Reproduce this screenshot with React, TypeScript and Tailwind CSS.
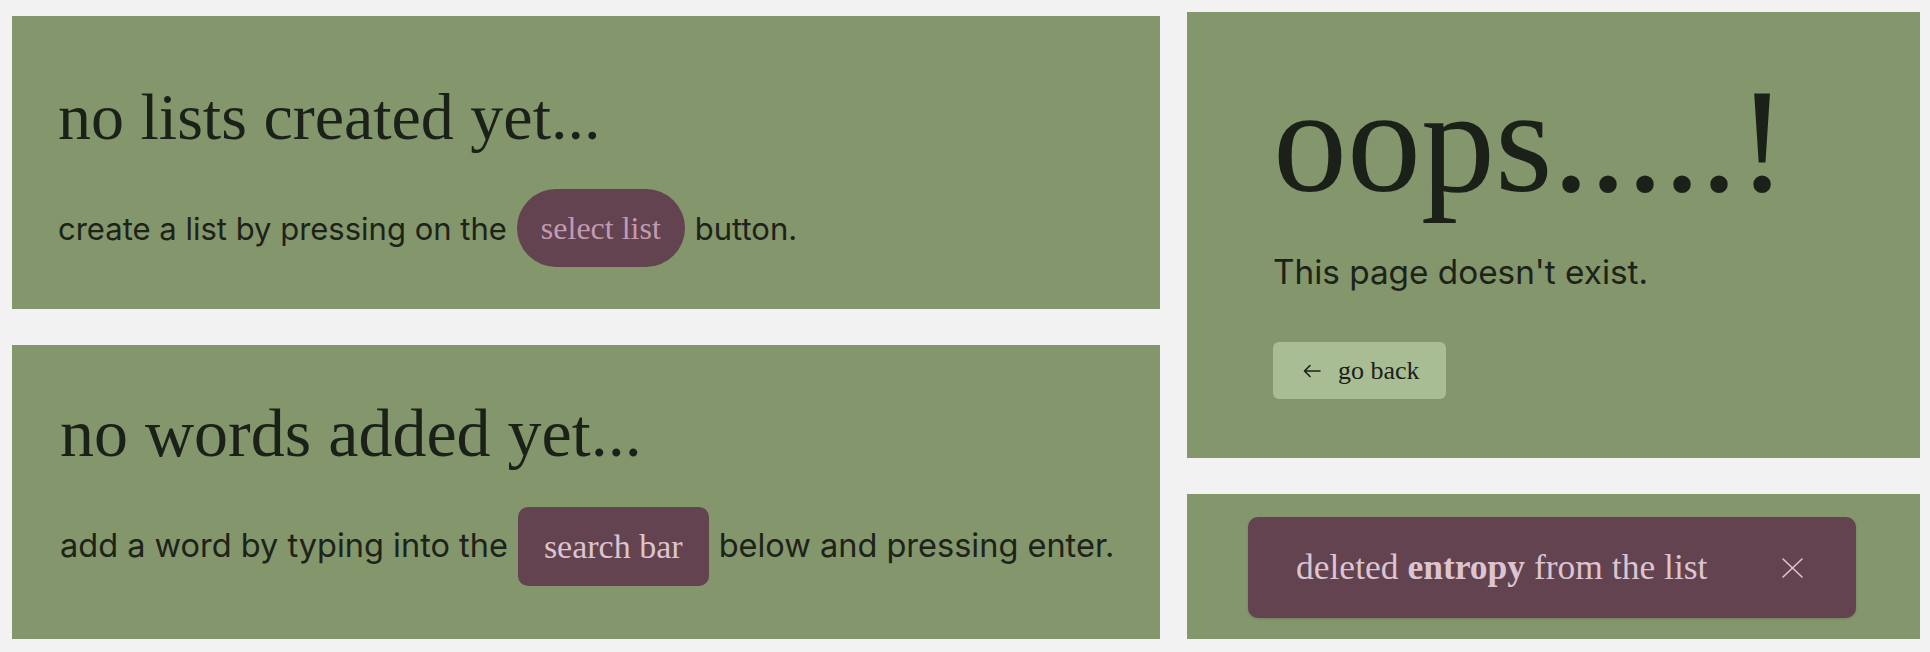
import React from 'react';

const serif = "font-['Liberation_Serif',serif]";
const sans = "font-['Inter',sans-serif]";

const EmptyLists = () => (
  <div className="h-[293px] bg-[#83966c] px-[46px] pt-[68px]">
    <h1 className={`${serif} text-[66px] leading-none text-[#1b2118]`}>no lists created yet...</h1>
    <p className={`${sans} mt-[39px] flex items-center whitespace-nowrap text-[31px] leading-none text-[#1d2319]`}>
      <span>create a list by pressing on the</span>
      <span className={`${serif} mx-[10px] flex h-[78px] items-center rounded-full bg-[#62434f] px-[24px] text-[32px] text-[#c29bb0]`}>
        select list
      </span>
      <span>button.</span>
    </p>
  </div>
);

const EmptyWords = () => (
  <div className="h-[294px] bg-[#83966c] pl-[48px] pt-[54px]">
    <h1 className={`${serif} text-[68px] leading-none text-[#1b2118]`}>no words added yet...</h1>
    <p className={`${sans} mt-[40px] flex items-center whitespace-nowrap text-[32.5px] leading-none text-[#1d2319]`}>
      <span className="shrink-0">add a word by typing into the</span>
      <span className={`${serif} mx-[10px] flex h-[79px] shrink-0 items-center rounded-[10px] bg-[#62434f] px-[26px] text-[34px] text-[#dcc4d1]`}>
        search bar
      </span>
      <span className="shrink-0">below and pressing enter.</span>
    </p>
  </div>
);

const NotFound = () => (
  <div className="h-[446px] bg-[#83966c] px-[86px] pt-[55px]">
    <h1 className={`${serif} text-[148px] leading-none text-[#1b2118]`}>oops.....!</h1>
    <p className={`${sans} mt-[41px] text-[33.3px] leading-none text-[#1d2319]`}>This page doesn't exist.</p>
    <button className="mt-[53px] flex h-[57px] w-[173px] items-center gap-[17px] rounded-[6px] bg-[#a9bd94] pl-[30px] text-[#1b2118]">
      <svg width="18" height="14" viewBox="0 0 18 14" fill="none" stroke="currentColor" strokeWidth="1.6" strokeLinecap="round" strokeLinejoin="round">
        <path d="M17 7H1.5M7 1.5L1.5 7L7 12.5" />
      </svg>
      <span className={`${serif} text-[26px] leading-none`}>go back</span>
    </button>
  </div>
);

const Toast = () => (
  <div className="h-[145px] bg-[#83966c] pl-[61px] pt-[23px]">
    <div className="flex h-[101px] w-[608px] items-center justify-between rounded-[10px] bg-[#62434f] pl-[48px] pr-[53px] shadow-sm">
      <span className={`${serif} whitespace-nowrap text-[35.5px] leading-none text-[#dcc4d0]`}>
        deleted <b className="font-bold">entropy</b> from the list
      </span>
      <svg width="21" height="20" viewBox="0 0 21 20" fill="none" stroke="#dcc4d0" strokeWidth="1.6" strokeLinecap="round">
        <path d="M1 1L20 19M20 1L1 19" />
      </svg>
    </div>
  </div>
);

export default function App() {
  return (
    <div className="flex min-h-[652px] gap-[27px] bg-[#f2f2f2] pl-[12px] pr-[10px] pt-[12px]">
      <div className="flex w-[1148px] flex-col gap-[36px] pt-[4px]">
        <EmptyLists />
        <EmptyWords />
      </div>
      <div className="flex w-[733px] flex-col gap-[36px]">
        <NotFound />
        <Toast />
      </div>
    </div>
  );
}
